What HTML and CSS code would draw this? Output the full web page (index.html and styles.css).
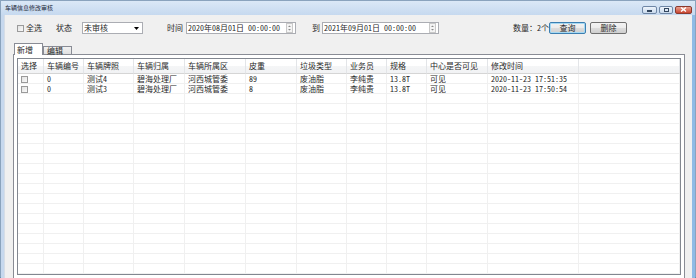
FILE: index.html
```html
<!DOCTYPE html>
<html>
<head>
<meta charset="utf-8">
<link rel="stylesheet" href="styles.css">
</head>
<body>
<div class="window">
  <div class="titlebar">
    <span class="title">车辆信息修改审核</span>
    <div class="caption">
      <span class="cbtn min"><i></i></span>
      <span class="cbtn max"><i></i></span>
      <span class="cbtn close"><svg width="7" height="5" viewBox="0 0 7 5"><path d="M1 0.5 L6 4.5 M6 0.5 L1 4.5" stroke="#fff" stroke-width="1.4"/></svg></span>
    </div>
  </div>
  <div class="frame">
    <div class="client">
      <div class="toolbar">
        <span class="chk tb-chk"></span><span class="lbl l-all">全选</span>
        <span class="lbl l-state">状态</span>
        <span class="combo"><span>未审核</span><svg width="5" height="3" viewBox="0 0 5 3"><path d="M0 0 H5 L2.5 3 Z" fill="#000"/></svg></span>
        <span class="lbl l-time">时间</span>
        <span class="picker p1"><span>2020年08月01日 00:00:00</span><span class="spin"><svg width="5" height="10" viewBox="0 0 5 10"><path d="M1 4 L2.5 2.5 L4 4 Z M1 6 L4 6 L2.5 7.5 Z" fill="#8a8a8a"/></svg></span></span>
        <span class="lbl l-to">到</span>
        <span class="picker p2"><span>2021年09月01日 00:00:00</span><span class="spin"><svg width="5" height="10" viewBox="0 0 5 10"><path d="M1 4 L2.5 2.5 L4 4 Z M1 6 L4 6 L2.5 7.5 Z" fill="#8a8a8a"/></svg></span></span>
        <span class="lbl l-count">数量：2个</span>
        <button class="btn b-query">查询</button>
        <button class="btn b-del">删除</button>
      </div>
      <div class="tabctl">
        <div class="tabstrip">
          <span class="tab active">新增</span>
          <span class="tab">编辑</span>
        </div>
        <div class="tabpage">
          <div class="grid">
            <table>
              <colgroup>
                <col class="c1"><col class="c2"><col class="c3"><col class="c4"><col class="c5"><col class="c6"><col class="c7"><col class="c8"><col class="c9"><col class="c10"><col class="c11"><col class="c12">
              </colgroup>
              <thead>
                <tr><th>选择</th><th>车辆编号</th><th>车辆牌照</th><th>车辆归属</th><th>车辆所属区</th><th>皮重</th><th>垃圾类型</th><th>业务员</th><th>规格</th><th>中心是否可见</th><th>修改时间</th><th></th></tr>
              </thead>
              <tbody>
                <tr><td><span class="chk"></span></td><td>0</td><td>测试4</td><td>碧海处理厂</td><td>河西城管委</td><td>89</td><td>废油脂</td><td>李纯贵</td><td>13.8T</td><td>可见</td><td>2020-11-23 17:51:35</td><td></td></tr>
                <tr><td><span class="chk"></span></td><td>0</td><td>测试3</td><td>碧海处理厂</td><td>河西城管委</td><td>8</td><td>废油脂</td><td>李纯贵</td><td>13.8T</td><td>可见</td><td>2020-11-23 17:50:54</td><td></td></tr>
                <tr><td></td><td></td><td></td><td></td><td></td><td></td><td></td><td></td><td></td><td></td><td></td><td></td></tr>
                <tr><td></td><td></td><td></td><td></td><td></td><td></td><td></td><td></td><td></td><td></td><td></td><td></td></tr>
                <tr><td></td><td></td><td></td><td></td><td></td><td></td><td></td><td></td><td></td><td></td><td></td><td></td></tr>
                <tr><td></td><td></td><td></td><td></td><td></td><td></td><td></td><td></td><td></td><td></td><td></td><td></td></tr>
                <tr><td></td><td></td><td></td><td></td><td></td><td></td><td></td><td></td><td></td><td></td><td></td><td></td></tr>
                <tr><td></td><td></td><td></td><td></td><td></td><td></td><td></td><td></td><td></td><td></td><td></td><td></td></tr>
                <tr><td></td><td></td><td></td><td></td><td></td><td></td><td></td><td></td><td></td><td></td><td></td><td></td></tr>
                <tr><td></td><td></td><td></td><td></td><td></td><td></td><td></td><td></td><td></td><td></td><td></td><td></td></tr>
                <tr><td></td><td></td><td></td><td></td><td></td><td></td><td></td><td></td><td></td><td></td><td></td><td></td></tr>
                <tr><td></td><td></td><td></td><td></td><td></td><td></td><td></td><td></td><td></td><td></td><td></td><td></td></tr>
                <tr><td></td><td></td><td></td><td></td><td></td><td></td><td></td><td></td><td></td><td></td><td></td><td></td></tr>
                <tr><td></td><td></td><td></td><td></td><td></td><td></td><td></td><td></td><td></td><td></td><td></td><td></td></tr>
                <tr><td></td><td></td><td></td><td></td><td></td><td></td><td></td><td></td><td></td><td></td><td></td><td></td></tr>
                <tr><td></td><td></td><td></td><td></td><td></td><td></td><td></td><td></td><td></td><td></td><td></td><td></td></tr>
                <tr><td></td><td></td><td></td><td></td><td></td><td></td><td></td><td></td><td></td><td></td><td></td><td></td></tr>
                <tr><td></td><td></td><td></td><td></td><td></td><td></td><td></td><td></td><td></td><td></td><td></td><td></td></tr>
                <tr><td></td><td></td><td></td><td></td><td></td><td></td><td></td><td></td><td></td><td></td><td></td><td></td></tr>
                <tr><td></td><td></td><td></td><td></td><td></td><td></td><td></td><td></td><td></td><td></td><td></td><td></td></tr>
              </tbody>
            </table>
          </div>
        </div>
      </div>
    </div>
  </div>
</div>
</body>
</html>
```

FILE: styles.css
```css
* { box-sizing: border-box; }
html, body { margin: 0; padding: 0; }
body {
  width: 696px;
  height: 278px;
  overflow: hidden;
  background: #fff;
  font-family: "Noto Sans Mono CJK SC", "Noto Sans CJK SC", sans-serif;
  font-size: 8px;
  color: #2a2a2a;
}
.window {
  width: 696px;
  height: 278px;
  border: 1px solid #8aa3bd;
  border-bottom-color: #3b8a9f;
  background: #bcd3ec;
  display: flex;
  flex-direction: column;
}
.titlebar {
  height: 14px;
  flex: none;
  background: linear-gradient(#dbe8f6, #c6d9ef);
  display: flex;
  align-items: center;
  justify-content: space-between;
  padding: 0 3px 0 4px;
}
.title {
  font-size: 6px;
  line-height: 8px;
  color: #1e2a3a;
}
.caption {
  display: flex;
  align-items: center;
  gap: 2px;
  margin-top: 3px;
}
.cbtn {
  height: 8px;
  border: 1px solid #6f87a6;
  border-radius: 2px;
  background: linear-gradient(#eef4fb, #c9d9ec);
  display: flex;
  align-items: center;
  justify-content: center;
}
.cbtn.min { width: 15px; }
.cbtn.max { width: 14px; }
.cbtn.close {
  width: 17px;
  border-color: #8a3a2e;
  background: linear-gradient(#e9a08f, #c9442f);
}
.cbtn.min i {
  width: 5px;
  height: 2px;
  background: #33465e;
  margin-top: 2px;
}
.cbtn.max i {
  width: 5px;
  height: 4px;
  border: 1px solid #33465e;
}
.frame {
  flex: 1;
  display: flex;
  padding: 0 4px 4px 3px;
  background: linear-gradient(90deg, #c6d8ee 0, #c6d8ee 686px, #8fbbe6 687px);
}
.client {
  flex: 1;
  background: #f0f0f0;
  border-left: 1px solid #d6dde6;
  display: flex;
  flex-direction: column;
}
.toolbar {
  height: 12px;
  margin-top: 7px;
  display: flex;
  align-items: center;
  flex: none;
}
.lbl { line-height: 12px; white-space: nowrap; }
.chk {
  display: inline-block;
  width: 7px;
  height: 7px;
  border: 1px solid #9a9a9a;
  background: linear-gradient(135deg, #e2e2e2, #fafafa);
}
.tb-chk { margin-left: 12px; }
.l-all { margin-left: 2px; }
.l-state { margin-left: 14px; }
.combo {
  margin-left: 10px;
  width: 61px;
  height: 12px;
  background: #fff;
  border: 1px solid #abadb3;
  display: flex;
  align-items: center;
  justify-content: space-between;
  padding: 0 3px 0 1px;
  line-height: 10px;
}
.l-time { margin-left: 24px; }
.picker {
  height: 12px;
  background: #fff;
  border: 1px solid #abadb3;
  display: flex;
  align-items: center;
  justify-content: space-between;
  padding: 0 2px 0 1px;
  line-height: 10px;
  white-space: nowrap;
}
.p1 { margin-left: 3px; width: 110px; }
.l-to { margin-left: 16px; }
.p2 { margin-left: 2px; width: 117px; }
.spin {
  width: 7px;
  height: 10px;
  border: 1px solid #c8c8c8;
  background: #f4f4f4;
  display: flex;
  align-items: center;
  justify-content: center;
}
.spin svg { display: block; }
.l-count { margin-left: 74px; }
.btn {
  font: inherit;
  width: 37px;
  height: 12px;
  padding: 0;
  line-height: 10px;
  border: 1px solid #707070;
  border-radius: 2px;
  background: linear-gradient(#f3f3f3, #ebebeb 50%, #dddddd 50%, #cfcfcf);
  color: #2a2a2a;
}
.b-query {
  border-color: #3c7fb1;
  box-shadow: inset 0 0 0 1px #a6d9f3;
}
.b-del { margin-left: 4px; }
.tabctl {
  flex: 1;
  margin: 9px 7px 6px 8px;
  display: flex;
  flex-direction: column;
}
.tabstrip {
  height: 11px;
  display: flex;
  align-items: flex-end;
  flex: none;
  position: relative;
  z-index: 1;
}
.tab {
  width: 29px;
  height: 8px;
  border: 1px solid #898c95;
  border-bottom: none;
  background: linear-gradient(#f2f2f2, #e0e0e0);
  padding-left: 3px;
  line-height: 8px;
  font-size: 8px;
}
.tab.active {
  margin-left: 1px;
  height: 12px;
  margin-bottom: -1px;
  background: #fff;
  padding-left: 2px;
  padding-top: 1px;
  line-height: 9px;
}
.tabpage {
  flex: 1;
  background: #fff;
  border: 1px solid #898c95;
  padding: 3px 3px 4px 3px;
  display: flex;
}
.grid {
  flex: 1;
  border: 1px solid #828790;
  overflow: hidden;
  background: #fff;
}
table {
  table-layout: fixed;
  border-collapse: separate;
  border-spacing: 0;
  width: 662px;
}
.c1 { width: 26px; }
.c2 { width: 40px; }
.c3 { width: 50px; }
.c4 { width: 51px; }
.c5 { width: 61px; }
.c6 { width: 51px; }
.c7 { width: 50px; }
.c8 { width: 40px; }
.c9 { width: 40px; }
.c10 { width: 61px; }
.c11 { width: 91px; }
.c12 { width: 101px; }
th {
  height: 15px;
  padding: 0 0 0 3px;
  font-weight: normal;
  text-align: left;
  line-height: 14px;
  white-space: nowrap;
  background: linear-gradient(#ffffff, #ffffff 50%, #f5f6f7 50%, #f1f2f4);
  border-right: 1px solid #e3e5e8;
  border-bottom: 1px solid #d5d5d5;
}
td {
  height: 10px;
  padding: 0 0 0 3px;
  line-height: 9px;
  white-space: nowrap;
  overflow: hidden;
  border-right: 1px solid #f0f0f0;
  border-bottom: 1px solid #f0f0f0;
}
td .chk {
  display: block;
  margin-top: 1px;
  width: 7px;
  height: 7px;
}
```
